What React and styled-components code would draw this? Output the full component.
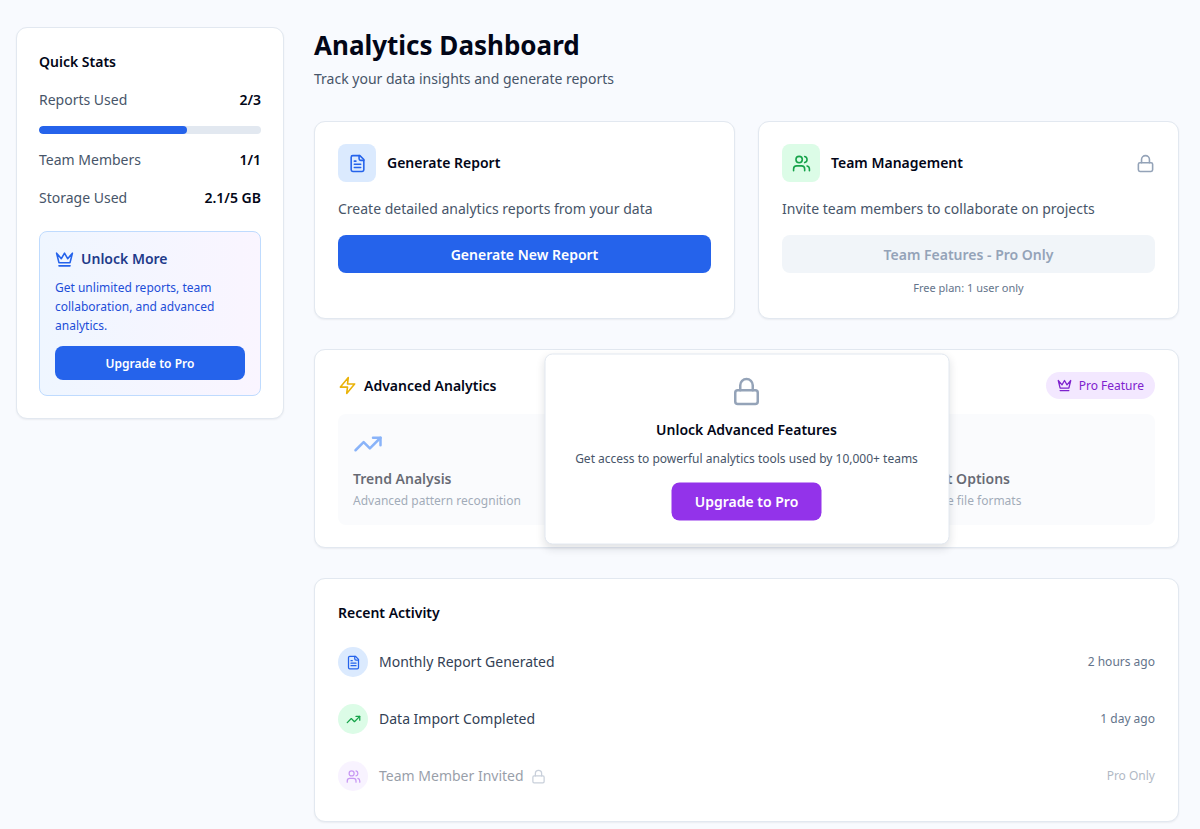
import React from "react";
import styled, { createGlobalStyle } from "styled-components";
import { Users, Lock, TrendingUp } from "lucide-react";

const GlobalStyle = createGlobalStyle`
  *, *::before, *::after { box-sizing: border-box; }
  body {
    margin: 0;
    background: #f8fafe;
    color: #020617;
    font-family: "Noto Sans", "Open Sans", sans-serif;
    font-size: 14px;
    line-height: 24px;
  }
  h1, h2, h3, p, ul { margin: 0; padding: 0; }
  ul { list-style: none; }
  button { font-family: inherit; cursor: pointer; }
  svg { display: block; flex: none; }
`;

const Page = styled.div`
  display: flex;
  align-items: flex-start;
  gap: 30px;
  min-height: 100vh;
  padding: 27px 21px 7px 16px;
`;

const Card = styled.section`
  position: relative;
  padding: 22px 23px;
  background: #ffffff;
  border: 1px solid #e2e8f0;
  border-radius: 11px;
  box-shadow: 0 1px 2px rgba(15, 23, 42, 0.06);
`;

const Sidebar = styled(Card).attrs({ as: "aside" })`
  display: flex;
  flex: 0 0 268px;
  flex-direction: column;
  gap: 14px;
  padding: 22px;
`;

const Title = styled.h2`
  font-size: 14px;
  font-weight: 600;
  line-height: 24px;
`;

const StatRow = styled.div`
  display: flex;
  justify-content: space-between;
  color: #475569;

  strong {
    color: #020617;
    font-weight: 600;
  }
`;

const Track = styled.div`
  height: 8px;
  overflow: hidden;
  background: #e2e8f0;
  border-radius: 4px;
`;

const TrackFill = styled.div`
  height: 100%;
  background: #2563eb;
  border-radius: 4px;
`;

const Promo = styled.div`
  display: flex;
  flex-direction: column;
  gap: 7px;
  margin-top: 7px;
  padding: 15px;
  background: linear-gradient(to right, #eff6ff, #faf5ff);
  border: 1px solid #bfdbfe;
  border-radius: 8px;
`;

const PromoTitle = styled(Title)`
  display: flex;
  align-items: center;
  gap: 7px;
  color: #1e3a8a;

  svg { color: #2563eb; }
`;

const PromoText = styled.p`
  color: #1d4ed8;
  font-size: 12px;
  line-height: 19px;
`;

const Button = styled.button`
  height: ${(p) => (p.$small ? "34px" : "38px")};
  width: ${(p) => (p.$inline ? "150px" : "100%")};
  margin-top: ${(p) => p.$top || 0}px;
  padding: 0;
  border: 0;
  border-radius: 8px;
  background: ${(p) => (p.$purple ? "#9333ea" : "#2563eb")};
  color: #ffffff;
  font-size: ${(p) => (p.$small ? "12px" : "14px")};
  font-weight: 600;

  &:disabled {
    background: #f1f5f9;
    color: #94a3b8;
    cursor: not-allowed;
  }
`;

const Main = styled.main`
  display: flex;
  flex: 1;
  flex-direction: column;
  gap: 30px;
  min-width: 0;
`;

const PageTitle = styled.h1`
  margin-bottom: 4px;
  font-size: 26px;
  font-weight: 700;
  line-height: 36px;
`;

const Muted = styled.p`
  color: #475569;
`;

const Columns = styled.div`
  display: grid;
  grid-template-columns: 1fr 1fr;
  gap: 23px;
`;

const CardHead = styled.div`
  display: flex;
  align-items: center;
  gap: 11px;
  margin-bottom: 15px;

  & > svg:last-child {
    margin-left: auto;
    color: #94a3b8;
  }
`;

const IconTile = styled.span`
  display: grid;
  place-items: center;
  width: 38px;
  height: 38px;
  background: ${(p) => p.$bg};
  border-radius: 8px;
  color: ${(p) => p.$fg};
`;

const Note = styled.p`
  margin-top: 7px;
  color: #64748b;
  font-size: 11px;
  line-height: 16px;
  text-align: center;
`;

const SectionHead = styled.div`
  display: flex;
  align-items: center;
  gap: 7px;
  margin-bottom: 15px;

  & > svg { color: #eab308; }
`;

const Badge = styled.span`
  display: flex;
  align-items: center;
  gap: 7px;
  height: 27px;
  margin-left: auto;
  padding: 0 11px;
  background: #f3e8ff;
  border-radius: 14px;
  color: #7e22ce;
  font-size: 12px;
`;

const Tiles = styled.div`
  display: grid;
  grid-template-columns: repeat(3, 1fr);
  gap: 15px;
  opacity: 0.6;
`;

const Tile = styled.div`
  min-height: 111px;
  padding: 15px;
  background: #f8fafc;
  border-radius: 8px;

  svg {
    height: 30px;
    margin-bottom: 8px;
    color: #3b82f6;
  }
`;

const TileSpacer = styled.div`
  height: 38px;
`;

const TileText = styled.p`
  color: #64748b;
  font-size: 12px;
  line-height: 19px;
`;

const Paywall = styled.div`
  position: absolute;
  top: 50%;
  left: 50%;
  display: flex;
  flex-direction: column;
  align-items: center;
  width: 405px;
  padding: 22px 22px 23px;
  transform: translate(-50%, -50%);
  background: #ffffff;
  border: 1px solid #e2e8f0;
  border-radius: 8px;
  box-shadow: 0 4px 8px rgba(15, 23, 42, 0.12);
  text-align: center;

  svg {
    margin-bottom: 11px;
    color: #94a3b8;
  }
`;

const PaywallText = styled.p`
  margin-top: 7px;
  color: #475569;
  font-size: 12px;
  line-height: 19px;
  white-space: nowrap;
`;

const ActivityList = styled.ul`
  display: flex;
  flex-direction: column;
  gap: 11px;
  margin-top: 14px;
`;

const ActivityRow = styled.li`
  display: flex;
  align-items: center;
  gap: 11px;
  padding: 8px 0;
  color: #334155;
  opacity: ${(p) => (p.$locked ? 0.5 : 1)};
`;

const Dot = styled.span`
  display: grid;
  place-items: center;
  width: 30px;
  height: 30px;
  background: ${(p) => p.$bg};
  border-radius: 50%;
  color: ${(p) => p.$fg};
`;

const ActivityName = styled.span`
  display: flex;
  align-items: center;
  gap: 7px;

  svg { color: #94a3b8; }
`;

const When = styled.span`
  margin-left: auto;
  color: #64748b;
  font-size: 12px;
`;

const Outline = ({ size, children }) => (
  <svg width={size} height={size} viewBox="0 0 24 24" fill="none" stroke="currentColor" strokeWidth="2" strokeLinecap="round" strokeLinejoin="round" aria-hidden="true">
    {children}
  </svg>
);

const Crown = ({ size }) => (
  <Outline size={size}>
    <path d="m2 4 3 12h14l3-12-6 7-4-7-4 7-6-7zm3 16h14" />
  </Outline>
);

const Bolt = ({ size }) => (
  <Outline size={size}>
    <polygon points="13 2 3 14 12 14 11 22 21 10 12 10 13 2" />
  </Outline>
);

const Report = ({ size }) => (
  <Outline size={size}>
    <path d="M15 2H6a2 2 0 0 0-2 2v16a2 2 0 0 0 2 2h12a2 2 0 0 0 2-2V7Z" />
    <path d="M14 2v4a2 2 0 0 0 2 2h4" />
    <path d="M10 9H8" />
    <path d="M16 13H8" />
    <path d="M16 17H8" />
  </Outline>
);

const activities = [
  { name: "Monthly Report Generated", when: "2 hours ago", Icon: Report, bg: "#dbeafe", fg: "#2563eb" },
  { name: "Data Import Completed", when: "1 day ago", Icon: TrendingUp, bg: "#dcfce7", fg: "#16a34a" },
  { name: "Team Member Invited", when: "Pro Only", Icon: Users, bg: "#f3e8ff", fg: "#9333ea", locked: true },
];

const Stat = ({ label, value }) => (
  <StatRow>
    <span>{label}</span>
    <strong>{value}</strong>
  </StatRow>
);

export default function App() {
  return (
    <>
      <GlobalStyle />
      <Page>
        <Sidebar>
          <Title>Quick Stats</Title>
          <Stat label="Reports Used" value="2/3" />
          <Track role="progressbar" aria-label="Reports used" aria-valuemin={0} aria-valuemax={3} aria-valuenow={2}>
            <TrackFill style={{ width: `${(2 / 3) * 100}%` }} />
          </Track>
          <Stat label="Team Members" value="1/1" />
          <Stat label="Storage Used" value="2.1/5 GB" />
          <Promo>
            <PromoTitle as="h3"><Crown size={19} />Unlock More</PromoTitle>
            <PromoText>Get unlimited reports, team collaboration, and advanced analytics.</PromoText>
            <Button type="button" $small $top={4}>Upgrade to Pro</Button>
          </Promo>
        </Sidebar>

        <Main>
          <header>
            <PageTitle>Analytics Dashboard</PageTitle>
            <Muted>Track your data insights and generate reports</Muted>
          </header>

          <Columns>
            <Card>
              <CardHead>
                <IconTile $bg="#dbeafe" $fg="#2563eb"><Report size={19} /></IconTile>
                <Title>Generate Report</Title>
              </CardHead>
              <Muted>Create detailed analytics reports from your data</Muted>
              <Button type="button" $top={14}>Generate New Report</Button>
            </Card>
            <Card>
              <CardHead>
                <IconTile $bg="#dcfce7" $fg="#16a34a"><Users size={19} /></IconTile>
                <Title>Team Management</Title>
                <Lock size={19} />
              </CardHead>
              <Muted>Invite team members to collaborate on projects</Muted>
              <Button type="button" disabled $top={14}>Team Features - Pro Only</Button>
              <Note>Free plan: 1 user only</Note>
            </Card>
          </Columns>

          <Card>
            <SectionHead>
              <Bolt size={19} />
              <Title>Advanced Analytics</Title>
              <Badge><Crown size={15} />Pro Feature</Badge>
            </SectionHead>
            <Tiles>
              <Tile>
                <TrendingUp size={30} />
                <Title as="h3">Trend Analysis</Title>
                <TileText>Advanced pattern recognition</TileText>
              </Tile>
              <Tile />
              <Tile>
                <TileSpacer />
                <Title as="h3">Export Options</Title>
                <TileText>Multiple file formats</TileText>
              </Tile>
            </Tiles>
            <Paywall>
              <Lock size={30} />
              <Title as="h3">Unlock Advanced Features</Title>
              <PaywallText>Get access to powerful analytics tools used by 10,000+ teams</PaywallText>
              <Button type="button" $purple $inline $top={15}>Upgrade to Pro</Button>
            </Paywall>
          </Card>

          <Card>
            <Title>Recent Activity</Title>
            <ActivityList>
              {activities.map(({ name, when, Icon, bg, fg, locked }) => (
                <ActivityRow key={name} $locked={locked}>
                  <Dot $bg={bg} $fg={fg}><Icon size={15} /></Dot>
                  <ActivityName>{name}{locked && <Lock size={15} />}</ActivityName>
                  <When>{when}</When>
                </ActivityRow>
              ))}
            </ActivityList>
          </Card>
        </Main>
      </Page>
    </>
  );
}
